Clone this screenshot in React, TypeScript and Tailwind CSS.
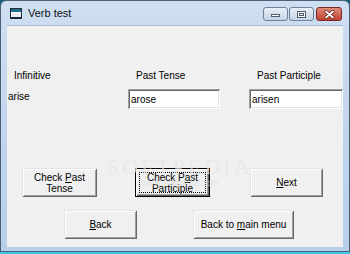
import React from "react";

const font = { fontFamily: '"Liberation Sans", Arial, sans-serif' };

function Button({
  children,
  w,
  isDefault,
}: {
  children: React.ReactNode;
  w: string;
  isDefault?: boolean;
}) {
  if (isDefault) {
    return (
      <div
        className={`${w} h-[29px] border border-black bg-[#f0f0f0] shadow-[inset_1px_1px_0_#fff,inset_-1px_-1px_0_#696969,inset_-2px_-2px_0_#a0a0a0] flex items-center justify-center p-[3px] shrink-0`}
      >
        <div className="w-full h-full border border-dotted border-black flex items-center justify-center text-center leading-[11px]">
          {children}
        </div>
      </div>
    );
  }
  return (
    <div
      className={`${w} h-[29px] bg-[#f0f0f0] shadow-[inset_1px_1px_0_#e3e3e3,inset_-1px_-1px_0_#696969,inset_2px_2px_0_#fff,inset_-2px_-2px_0_#a0a0a0] flex items-center justify-center text-center leading-[11px] shrink-0`}
    >
      {children}
    </div>
  );
}

function TextBox({ value, w }: { value: string; w: string }) {
  return (
    <div
      className={`${w} h-[20px] bg-white shadow-[inset_1px_1px_0_#a0a0a0,inset_-1px_-1px_0_#fff,inset_2px_2px_0_#696969,inset_-2px_-2px_0_#e3e3e3] flex items-center pl-[3px] shrink-0`}
    >
      {value}
    </div>
  );
}

export default function App() {
  return (
    <div className="w-[350px] h-[254px] bg-[#1b5c7a] text-[10px] text-black" style={font}>
      <div className="w-[350px] h-[252px] rounded-t-[6px] border border-[#4a5f78] bg-gradient-to-b from-[#cfdff2] via-[#c2d6ee] to-[#b9cfe9] flex flex-col">
        {/* Title bar */}
        <div className="h-[24px] flex items-center pl-[9px] pr-[7px] shrink-0">
          <svg width="12" height="11" viewBox="0 0 12 11" className="mr-[6px] mt-[1px]">
            <rect x="0.5" y="0.5" width="11" height="10" fill="#fff" stroke="#1f2a36" />
            <rect x="1" y="1" width="10" height="3" fill="#1d6c8c" />
            <rect x="2" y="5" width="9" height="5" fill="#e8eef4" />
            <rect x="0" y="9" width="12" height="2" fill="#1f2a36" />
          </svg>
          <span className="text-[11px] text-[#111]">Verb test</span>
          <div className="ml-auto flex items-center mt-[2px]">
            <div className="w-[25px] h-[14px] rounded-[3px] border border-[#6f819a] bg-gradient-to-b from-[#e9f0f8] to-[#c5d3e5] flex items-end justify-center pb-[3px]">
              <div className="w-[9px] h-[3px] bg-white border border-[#4b5a6e]" />
            </div>
            <div className="w-[25px] h-[14px] ml-[1px] rounded-[3px] border border-[#6f819a] bg-gradient-to-b from-[#e9f0f8] to-[#c5d3e5] flex items-center justify-center">
              <div className="w-[9px] h-[7px] border border-[#4b5a6e] bg-white flex items-center justify-center">
                <div className="w-[5px] h-[3px] border border-[#4b5a6e]" />
              </div>
            </div>
            <div className="w-[26px] h-[14px] ml-[2px] rounded-[3px] border border-[#7a2a22] bg-gradient-to-b from-[#e08a7c] to-[#c0402f] flex items-center justify-center">
              <svg width="11" height="9" viewBox="0 0 11 9">
                <path d="M2 1.5 L9 7.5 M9 1.5 L2 7.5" stroke="#5a1a12" strokeWidth="3.2" strokeLinecap="round" />
                <path d="M2 1.5 L9 7.5 M9 1.5 L2 7.5" stroke="#fff" strokeWidth="1.8" strokeLinecap="round" />
              </svg>
            </div>
          </div>
        </div>

        {/* Client area */}
        <div className="relative ml-[6px] w-[336px] h-[222px] bg-[#f0f0f0] border-t border-[#a7bbd3] overflow-hidden">
          <div className="flex mt-[43px] h-[13px] leading-[13px]">
            <span className="w-[129px] pl-[7px]">Infinitive</span>
            <span className="w-[121px]">Past Tense</span>
            <span>Past Participle</span>
          </div>

          <div className="flex mt-[7px] h-[20px] items-center">
            <span className="w-[122px] pl-[1px] mt-[-5px]">arise</span>
            <TextBox value="arose" w="w-[92px]" />
            <div className="w-[29px] shrink-0" />
            <TextBox value="arisen" w="w-[94px]" />
          </div>

          <div className="flex mt-[59px] pl-[15px]">
            <Button w="w-[75px]">
              <span>
                Check <u>P</u>ast
                <br />
                Tense
              </span>
            </Button>
            <div className="w-[38px] shrink-0" />
            <Button w="w-[75px]" isDefault>
              <span>
                Check P<u>a</u>st
                <br />
                Participle
              </span>
            </Button>
            <div className="w-[40px] shrink-0" />
            <Button w="w-[73px]">
              <span>
                <u>N</u>ext
              </span>
            </Button>
          </div>

          <div className="flex mt-[13px] pl-[57px]">
            <Button w="w-[73px]">
              <span>
                <u>B</u>ack
              </span>
            </Button>
            <div className="w-[56px] shrink-0" />
            <Button w="w-[101px]">
              <span>
                Back to <u>m</u>ain menu
              </span>
            </Button>
          </div>

          {/* watermark */}
          <div className="absolute left-[100px] top-[130px] flex flex-col items-center pointer-events-none select-none">
            <span className="text-[22px] leading-[22px] tracking-[3px] text-[#e6e6e6] opacity-70" style={{ fontFamily: '"Liberation Serif", serif' }}>
              SOFTPEDIA
            </span>
            <span className="text-[9px] leading-[10px] text-[#dcdcdc] opacity-70">www.softpedia.com</span>
          </div>
        </div>
      </div>
      <div className="h-[2px] bg-[#3cc8e6]" />
    </div>
  );
}
